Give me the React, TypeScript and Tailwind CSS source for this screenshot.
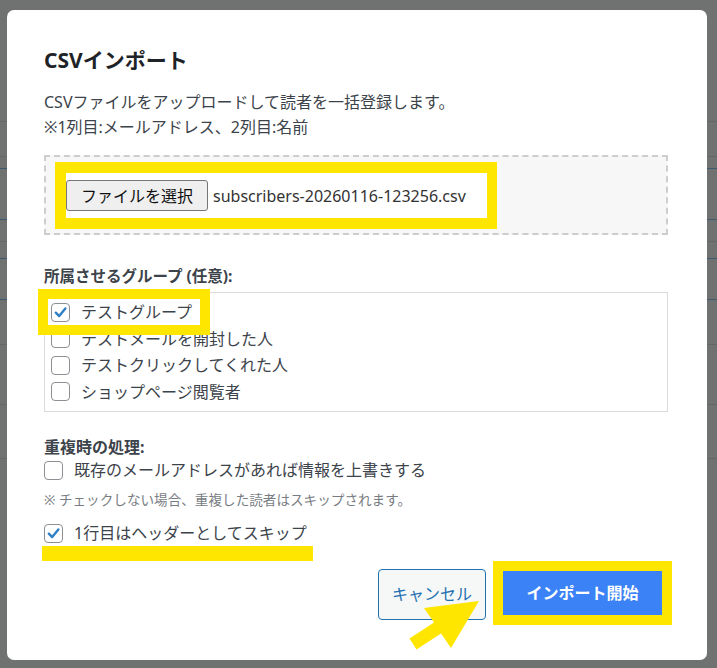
import React from "react";

const FONT = { fontFamily: '"Noto Sans", "Noto Sans CJK JP", sans-serif' };

function Check({ checked }: { checked?: boolean }) {
  return (
    <span className="flex h-[19px] w-[19px] shrink-0 items-center justify-center rounded-[4px] border border-[#8c8f94] bg-white">
      {checked && (
        <svg width="15" height="15" viewBox="0 0 16 16">
          <path d="M3 8.2 L6.6 11.8 L13.2 3.8" fill="none" stroke="#2f7fc4" strokeWidth="2.6" strokeLinecap="round" strokeLinejoin="round" />
        </svg>
      )}
    </span>
  );
}

export default function App() {
  const groups = ["テストグループ", "テストメールを開封した人", "テストクリックしてくれた人", "ショップページ閲覧者"];
  return (
    <div className="relative h-[668px] w-[717px] overflow-hidden bg-[#707171]" style={FONT}>
      {/* dimmed page behind */}
      <div className="flex flex-col">
        <div className="h-[122px] border-b border-[#656666]" />
        <div className="h-[35px] border-b border-[#656666]" />
        <div className="h-[12px] border-b border-[#3d5a72]" />
        <div className="h-[51px] border-b border-[#3d5a72]" />
        <div className="h-[22px] border-b border-[#656666]" />
        <div className="h-[17px] border-b border-[#3d5a72]" />
        <div className="h-[41px] border-b border-[#3d5a72]" />
        <div className="h-[45px] border-b border-[#656666]" />
        <div className="h-[60px] border-b border-[#656666]" />
        <div className="h-[54px] border-b border-[#656666]" />
      </div>

      {/* modal */}
      <div className="absolute left-[7px] top-[10px] h-[650px] w-[700px] rounded-[7px] bg-white pl-[37px] pr-[39px] pt-[36px] text-[#3c434a]">
        <h2 className="text-[21px] font-bold leading-[28px] text-[#1d2327]">CSVインポート</h2>
        <div className="mt-[16px] text-[16px] leading-[25px]">
          <p>CSVファイルをアップロードして読者を一括登録します。</p>
          <p>※1列目:メールアドレス、2列目:名前</p>
        </div>

        <div className="mt-[15px] h-[80px] border-2 border-dashed border-[#cdcdcd] bg-[#f7f7f7] pl-[9px] pt-[5px]">
          <div className="flex h-[67px] w-[442px] items-center border-[11px] border-r-[10px] border-[#ffe600] bg-white">
            <button className="h-[31px] w-[142px] rounded-[3px] border border-[#767676] bg-[#efefef] text-[16px] text-[#111]">
              ファイルを選択
            </button>
            <span className="ml-[5px] text-[16px] text-[#333]">subscribers-20260116-123256.csv</span>
          </div>
        </div>

        <div className="mt-[29px] text-[15.5px] font-bold leading-[24px] text-[#3c434a]">所属させるグループ (任意):</div>
        <div className="relative mt-[4px] h-[120px] border border-[#dcdcde] pl-[6px] pt-[6px]">
          {groups.map((g, i) => (
            <div key={g} className="flex h-[26.5px] items-center gap-[11px] text-[16px]">
              <Check checked={i === 0} />
              <span>{g}</span>
            </div>
          ))}
          <div className="absolute left-[-7px] top-[-4px] h-[46px] w-[172px] border-[10px] border-[#ffe600]" />
        </div>

        <div className="mt-[24px] text-[16px] font-bold leading-[22px]">重複時の処理:</div>
        <div className="flex h-[24px] items-center gap-[11px] text-[16px]">
          <Check />
          <span>既存のメールアドレスがあれば情報を上書きする</span>
        </div>
        <div className="mt-[8px] text-[13.6px] leading-[20px] text-[#787c82]">※ チェックしない場合、重複した読者はスキップされます。</div>
        <div className="mt-[11px] flex h-[24px] items-center gap-[11px] text-[16px]">
          <Check checked />
          <span>1行目はヘッダーとしてスキップ</span>
        </div>
        <div className="ml-[-2px] mt-[1px] h-[15px] w-[271px] bg-[#ffe600]" />

        <div className="mr-[-4px] flex items-center justify-end gap-[7px]">
          <button className="mt-[2px] h-[51px] w-[108px] rounded-[4px] border border-[#2271b1] bg-[#f6f7f7] text-[16px] text-[#2271b1]">
            キャンセル
          </button>
          <div className="border-[10px] border-[#ffe600]">
            <button className="h-[44px] w-[159px] bg-[#3b82f6] text-[16px] font-bold text-white">インポート開始</button>
          </div>
        </div>
      </div>

      {/* arrow */}
      <svg className="absolute left-0 top-0" width="717" height="668" viewBox="0 0 717 668">
        <polygon
          points="409.5,638.6 434,622.6 424,608 479,601 451,648 441,633.4 416.5,649.4"
          fill="#ffe600"
        />
      </svg>
    </div>
  );
}
